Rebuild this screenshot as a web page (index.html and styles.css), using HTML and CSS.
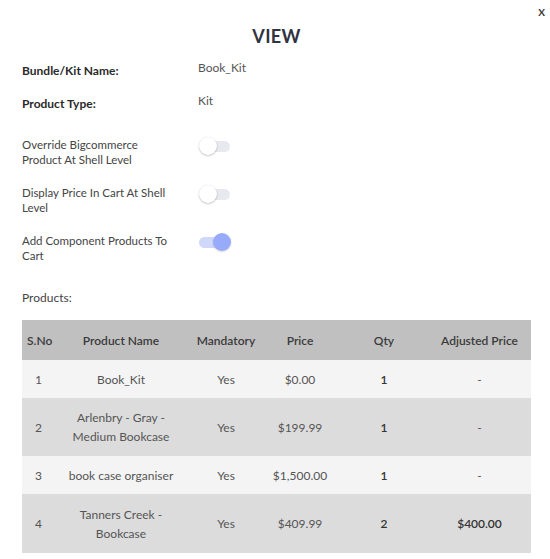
FILE: index.html
```html
<!DOCTYPE html>
<html>
<head>
<meta charset="utf-8">
<link rel="stylesheet" href="styles.css">
</head>
<body>
<div class="modal">
  <div class="close">X</div>
  <h1 class="title">VIEW</h1>
  <div class="field">
    <div class="label strong">Bundle/Kit Name:</div>
    <div class="value">Book_Kit</div>
  </div>
  <div class="field field-gap">
    <div class="label strong">Product Type:</div>
    <div class="value">Kit</div>
  </div>
  <div class="field toggle-field">
    <div class="label">Override Bigcommerce Product At Shell Level</div>
    <div class="switch"><span class="track"></span><span class="knob"></span></div>
  </div>
  <div class="field toggle-field">
    <div class="label">Display Price In Cart At Shell Level</div>
    <div class="switch"><span class="track"></span><span class="knob"></span></div>
  </div>
  <div class="field toggle-field">
    <div class="label">Add Component Products To Cart</div>
    <div class="switch on"><span class="track"></span><span class="knob"></span></div>
  </div>
  <div class="products-label">Products:</div>
  <table class="products">
    <colgroup>
      <col class="c-sno"><col class="c-name"><col class="c-mand"><col class="c-price"><col class="c-qty"><col class="c-adj">
    </colgroup>
    <thead>
      <tr><th class="sno">S.No</th><th>Product Name</th><th>Mandatory</th><th>Price</th><th>Qty</th><th class="adj">Adjusted Price</th></tr>
    </thead>
    <tbody>
      <tr class="light"><td class="sno">1</td><td>Book_Kit</td><td>Yes</td><td>$0.00</td><td class="qty">1</td><td class="adj">-</td></tr>
      <tr class="dark"><td class="sno">2</td><td>Arlenbry - Gray -<br>Medium Bookcase</td><td>Yes</td><td>$199.99</td><td class="qty">1</td><td class="adj">-</td></tr>
      <tr class="light"><td class="sno">3</td><td>book case organiser</td><td>Yes</td><td>$1,500.00</td><td class="qty">1</td><td class="adj">-</td></tr>
      <tr class="dark tall"><td class="sno">4</td><td>Tanners Creek -<br>Bookcase</td><td>Yes</td><td>$409.99</td><td class="qty">2</td><td class="adj strong-val">$400.00</td></tr>
    </tbody>
  </table>
</div>
</body>
</html>
```
FILE: styles.css
```css
* { box-sizing: border-box; }
html, body { margin: 0; padding: 0; background: #fff; }
body {
  font-family: "Source Sans Pro", "Lato", "Liberation Sans", sans-serif;
  color: #555;
  font-size: 12px;
}
.modal {
  width: 550px;
  height: 559px;
  padding: 0 19px 0 22px;
  position: relative;
  overflow: hidden;
}
.close {
  position: absolute;
  top: 6px;
  right: 5px;
  font-size: 10px;
  font-weight: 700;
  color: #333;
}
.title {
  margin: 0;
  padding-top: 25px;
  height: 60px;
  text-align: center;
  font-size: 18px;
  font-weight: 700;
  color: #2f3342;
  letter-spacing: 0.3px;
  line-height: 22px;
}
.field {
  display: flex;
  align-items: flex-start;
  height: 33px;
}
.field-gap { height: 44px; }
.field .label {
  width: 176px;
  line-height: 15px;
  padding-top: 3px;
}
.label.strong {
  font-weight: 700;
  color: #2a2a2a;
}
.value {
  color: #555;
  line-height: 15px;
}
.toggle-field {
  height: 48px;
}
.toggle-field .label {
  width: 176px;
  font-size: 11.5px;
  color: #444;
  padding-right: 20px;
  padding-top: 0;
}
.switch {
  position: relative;
  width: 34px;
  height: 20px;
  margin-top: -1px;
}
.switch .track {
  position: absolute;
  left: 3px;
  top: 5px;
  width: 29px;
  height: 11px;
  border-radius: 6px;
  background: #e8e9ef;
}
.switch .knob {
  position: absolute;
  left: 1px;
  top: 1px;
  width: 18px;
  height: 18px;
  border-radius: 50%;
  background: #fff;
  box-shadow: 0 1px 2px rgba(0,0,0,0.2), 0 0 1px rgba(0,0,0,0.15);
}
.switch.on .track { background: #cfd8fb; width: 27px; left: 1px; }
.switch.on .knob { left: 15px; background: #98abfa; box-shadow: 0 1px 2px rgba(0,0,0,0.15); }
.products-label {
  margin-top: 9px;
  height: 30px;
  color: #444;
}
.products {
  width: 509px;
  border-collapse: collapse;
  table-layout: fixed;
  font-size: 12px;
}
.c-sno { width: 38px; }
.c-name { width: 122px; }
.c-mand { width: 88px; }
.c-price { width: 60px; }
.c-qty { width: 108px; }
.c-adj { width: 93px; }
.products th {
  background: #c0c0c0;
  height: 40px;
  font-weight: 600;
  color: #3a3a3a;
  text-align: center;
  padding: 0;
  white-space: nowrap;
}
.products th.sno { text-align: left; padding-left: 5px; }
.products th.adj, .products td.adj { padding-right: 10px; }
.products td {
  text-align: center;
  padding: 0;
  line-height: 19px;
  height: 38px;
}
.products td.sno { text-align: left; padding-left: 13px; }
.products tr.dark td { height: 58px; background: #dcdcdc; }
.products tr.light td { background: #f4f4f4; }
.products tr.tall td { height: 59px; }
.products td.qty { font-weight: 600; color: #333; }
.products td.strong-val { font-weight: 600; color: #333; }
```
